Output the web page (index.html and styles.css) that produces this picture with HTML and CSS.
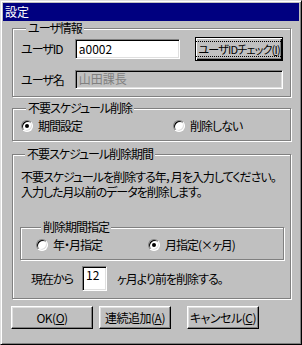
FILE: index.html
```html
<!DOCTYPE html>
<html lang="ja">
<head>
    <meta charset="UTF-8">
    <title>設定</title>
    <link rel="stylesheet" href="styles.css">
</head>
<body>
<div class="window">
    <div class="titlebar">設定</div>
    <div class="content">
        <fieldset class="group user-group">
            <legend>ユーザ情報</legend>
            <div class="row">
                <span class="label">ユーザID</span>
                <div class="field id-field">a0002</div>
                <button class="btn btn-default id-check"><span class="focus">ユーザIDチェック(<u>I</u>)</span></button>
            </div>
            <div class="row name-row">
                <span class="label">ユーザ名</span>
                <div class="field field-disabled name-field">山田課長</div>
            </div>
        </fieldset>

        <fieldset class="group delete-group">
            <legend>不要スケジュール削除</legend>
            <div class="radio-row">
                <label class="option opt-period"><span class="radio on"></span>期間設定</label>
                <label class="option"><span class="radio"></span>削除しない</label>
            </div>
        </fieldset>

        <fieldset class="group period-group">
            <legend>不要スケジュール削除期間</legend>
            <p class="note">不要スケジュールを削除する年，月を入力してください。<br>入力した月以前のデータを削除します。</p>

            <fieldset class="group inner-group">
                <legend>削除期間指定</legend>
                <div class="radio-row">
                    <label class="option opt-ym"><span class="radio"></span>年・月指定</label>
                    <label class="option"><span class="radio on"></span>月指定(×ヶ月)</label>
                </div>
            </fieldset>

            <div class="months-row">
                <span class="months-label">現在から</span>
                <div class="field months-field">12</div>
                <span class="months-after">ヶ月より前を削除する。</span>
            </div>
        </fieldset>

        <div class="buttons">
            <button class="btn btn-ok">OK(<u>O</u>)</button>
            <button class="btn btn-add">連続追加(<u>A</u>)</button>
            <button class="btn btn-cancel">キャンセル(<u>C</u>)</button>
        </div>
    </div>
</div>
</body>
</html>
```

FILE: styles.css
```css
* {
    margin: 0;
    padding: 0;
    box-sizing: border-box;
}

body {
    background: #c0c0c0;
    font-family: "Noto Sans CJK JP", "Liberation Sans", sans-serif;
    font-size: 12px;
    line-height: 12px;
    letter-spacing: -1px;
    color: #000;
    font-feature-settings: "palt";
}

/* ウィンドウ枠 */
.window {
    width: 302px;
    height: 345px;
    padding: 2px;
    background: #c0c0c0;
    border: 1px solid;
    border-color: #dfdfdf #000 #000 #dfdfdf;
    box-shadow: inset 1px 1px #fff, inset -1px -1px #808080;
}

.titlebar {
    height: 18px;
    padding: 3px 2px;
    background: #000080;
    color: #fff;
    letter-spacing: 0;
}

.content {
    padding: 0 8px 0 9px;
}

/* グループボックス */
.group {
    border: 1px solid #808080;
    box-shadow: inset 1px 1px #fff, 1px 1px #fff;
    min-width: 0;
}

.group legend {
    margin-left: 5px;
    padding: 0 2px;
    line-height: 12px;
    background: #c0c0c0;
}

.user-group {
    margin-top: 1px;
    padding: 3px 7px 7px 8px;
}

.delete-group {
    margin-top: 5px;
    padding: 6px 7px 8px 8px;
}

.period-group {
    margin-top: 7px;
    padding: 9px 6px 7px 7px;
}

.inner-group {
    margin-top: 22px;
    padding: 6px 6px 8px 15px;
}

/* 入力欄 */
.row {
    display: flex;
    align-items: center;
}

.label {
    width: 54px;
}

.field {
    padding: 3px 3px;
    background: #fff;
    letter-spacing: 0;
    border: 1px solid;
    border-color: #808080 #fff #fff #808080;
    box-shadow: inset 1px 1px #000, inset -1px -1px #dfdfdf;
}

.id-field {
    width: 106px;
    height: 20px;
}

.name-row {
    margin-top: 9px;
}

.name-field {
    width: 209px;
    height: 19px;
    padding-top: 2px;
}

.field-disabled {
    background: #c0c0c0;
    color: #808080;
}

/* ボタン */
.btn {
    font: inherit;
    letter-spacing: -0.5px;
    color: #000;
    background: #c0c0c0;
    border: 1px solid;
    border-color: #fff #000 #000 #fff;
    box-shadow: inset -1px -1px #808080, inset 1px 1px #dfdfdf;
    display: flex;
    align-items: center;
    justify-content: center;
}

.btn-default {
    border-color: #000;
    box-shadow: inset 1px 1px #fff, inset -1px -1px #000, inset -2px -2px #808080;
}

.id-check {
    width: 88px;
    height: 24px;
    margin-left: 15px;
    font-size: 11px;
    letter-spacing: -0.8px;
}

.focus {
    padding: 1px 2px;
    outline: 1px dotted #000;
    white-space: nowrap;
}

/* ラジオボタン */
.radio-row {
    display: flex;
    align-items: center;
}

.option {
    display: flex;
    align-items: center;
    gap: 5px;
}

.opt-period {
    width: 152px;
}

.opt-ym {
    width: 112px;
}

.radio {
    width: 12px;
    height: 12px;
    border-radius: 50%;
    background: #fff;
    border: 1px solid;
    border-color: #808080 #fff #fff #808080;
    box-shadow: inset 1px 1px #000, inset -1px -1px #dfdfdf;
    display: flex;
    align-items: center;
    justify-content: center;
}

.radio.on::after {
    content: "";
    width: 4px;
    height: 4px;
    border-radius: 50%;
    background: #000;
}

/* 説明文と月数 */
.note {
    margin-left: 1px;
    line-height: 15px;
    white-space: nowrap;
}

.months-row {
    display: flex;
    align-items: center;
    margin-top: 6px;
    padding-left: 11px;
}

.months-label {
    width: 51px;
}

.months-field {
    width: 25px;
    height: 25px;
    padding: 2px 3px;
}

.months-after {
    margin-left: 10px;
}

.buttons {
    display: flex;
    margin: 7px 0 0 -1px;
}

.buttons .btn {
    height: 23px;
}

.btn-ok {
    width: 82px;
}

.btn-add {
    width: 72px;
    margin-left: 6px;
}

.btn-cancel {
    width: 72px;
    margin-left: 16px;
}
```
